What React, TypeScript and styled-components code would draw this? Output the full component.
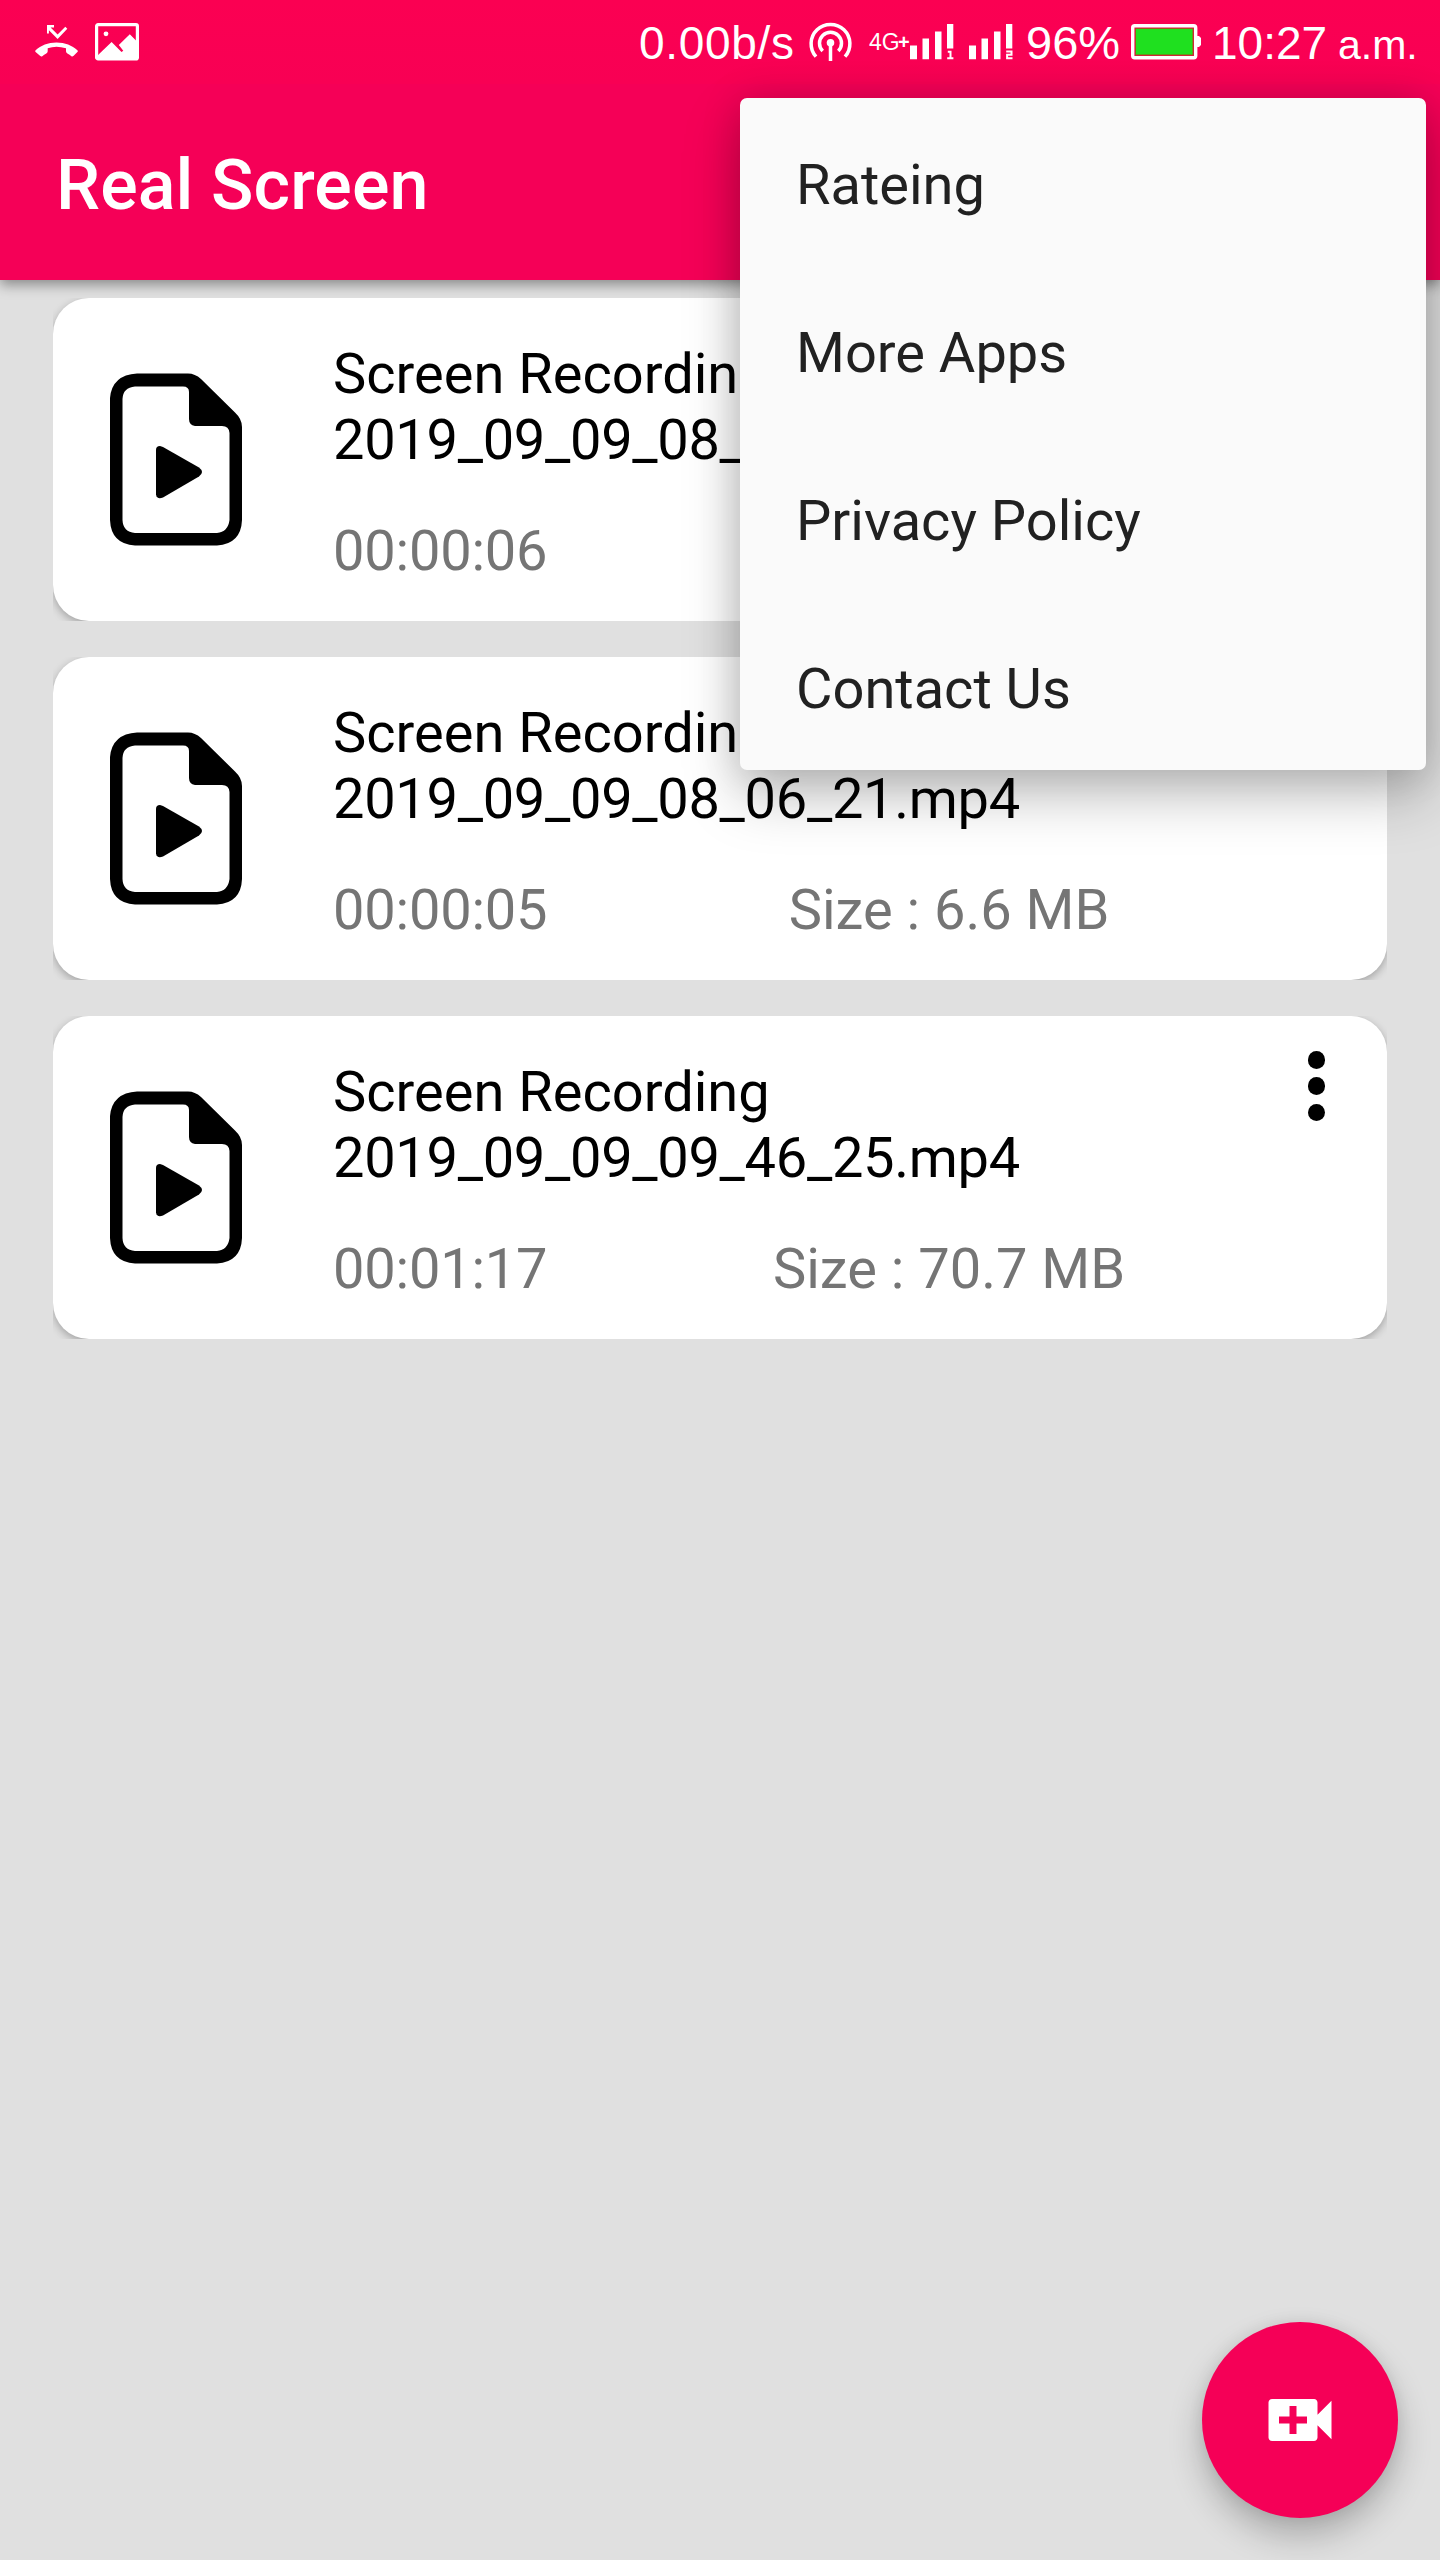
import React from 'react';
import styled, { createGlobalStyle } from 'styled-components';

const GlobalStyle = createGlobalStyle`
  * { box-sizing: border-box; }
  body { margin: 0; background: #e0e0e0; }
`;

const Screen = styled.div`
  position: relative;
  width: 1440px;
  height: 2560px;
  overflow: hidden;
  background: #e0e0e0;
  font-family: Roboto, "Liberation Sans", sans-serif;
`;

const Header = styled.header`
  position: relative;
  height: 280px;
  background: #f50057;
  color: #fff;
  box-shadow: 0 5px 12px rgba(0, 0, 0, 0.38);
`;

const StatusBar = styled.div`
  display: flex;
  align-items: center;
  height: 84px;
  padding: 0 22px 0 35px;
  background: linear-gradient(#fb0052, #f80054);
  font-family: "Liberation Sans", Arial, sans-serif;
`;

const Spacer = styled.div`
  flex: 1;
`;

const StatusText = styled.span<{
  $size: number;
  $width: number;
  $gap?: number;
  $shift?: number;
  $spacing?: number;
  $bold?: boolean;
}>`
  flex: none;
  width: ${p => p.$width}px;
  margin-left: ${p => p.$gap ?? 0}px;
  padding-top: ${p => p.$shift ?? 0}px;
  font-size: ${p => p.$size}px;
  font-weight: ${p => (p.$bold ? 700 : 400)};
  line-height: 54px;
  letter-spacing: ${p => p.$spacing ?? 0}px;
  white-space: nowrap;
`;

const StatusIcon = styled.svg<{ $gap?: number }>`
  flex: none;
  display: block;
  margin-left: ${p => p.$gap ?? 0}px;
`;

const Toolbar = styled.div`
  display: flex;
  align-items: center;
  height: 196px;
  padding: 6px 56px 0;
`;

const Title = styled.h1`
  margin: 0;
  font-size: 70px;
  font-weight: 500;
  line-height: 82px;
  letter-spacing: 0.1px;
`;

const List = styled.main`
  display: flex;
  flex-direction: column;
  gap: 36px;
  padding: 18px 53px;
`;

const CardClip = styled.div`
  height: 323px;
  overflow: hidden;
`;

const Card = styled.article`
  display: flex;
  height: 100%;
  border-radius: 36px;
  background: #fff;
  box-shadow: 0 3px 8px rgba(0, 0, 0, 0.28);
`;

const Thumb = styled.div`
  width: 280px;
  padding: 75px 0 0 57px;
`;

const Info = styled.div`
  width: 924px;
  padding-top: 43px;
  font-size: 56px;
  line-height: 66px;
`;

const Name = styled.div`
  width: 720px;
  color: #000;
`;

const Stamp = styled.span`
  letter-spacing: -0.3px;
`;

const Meta = styled.div`
  display: grid;
  grid-template-columns: 1fr 2fr;
  margin-top: 45px;
  color: #757575;
`;

const Duration = styled.span`
  letter-spacing: -0.2px;
`;

const Size = styled.span`
  text-align: center;
`;

const MoreButton = styled.button`
  display: flex;
  flex-direction: column;
  align-items: center;
  gap: 8.5px;
  width: 119px;
  padding: 35px 0 0;
  border: 0;
  background: none;
`;

const Dot = styled.i`
  width: 17.8px;
  height: 17.8px;
  border-radius: 50%;
  background: #000;
`;

const Menu = styled.nav`
  position: absolute;
  top: 98px;
  left: 740px;
  width: 686px;
  border-radius: 7px;
  background: #fafafa;
  box-shadow: 0 26px 56px rgba(0, 0, 0, 0.25), 0 0 40px rgba(0, 0, 0, 0.14);
`;

const MenuItem = styled.div`
  display: flex;
  align-items: center;
  height: 168px;
  padding: 5px 56px 0;
  color: #212121;
  font-size: 56px;
  line-height: 66px;
`;

const Fab = styled.button`
  position: absolute;
  right: 42px;
  bottom: 42px;
  display: flex;
  align-items: center;
  justify-content: center;
  width: 196px;
  height: 196px;
  padding: 0;
  border: 0;
  border-radius: 50%;
  background: #f50057;
  box-shadow: 0 18px 34px rgba(0, 0, 0, 0.24), 0 0 16px rgba(0, 0, 0, 0.07);
`;

const MissedCallIcon = () => (
  <StatusIcon width="43" height="34" viewBox="0 0 43 34" fill="#fff">
    <path d="M12 0h7v2.500h-3.400l7 7L30.300 1.800l2 2L22.600 14 13.900 5.200V8.500H12z" />
    <path d="M.6 25.200C6 20.500 13 17.600 21.500 17.600S37 20.500 42.400 25.200q.8 1 0 1.900l-4 4q-1 .8-2 .1-1.800-1.600-4-2.700-1.400-.8-1.400-2.300v-3Q26 21.700 21.500 21.700T12.700 23.200v3q0 1.500-1.400 2.300-2.200 1.100-4 2.700-1 .7-2-.1l-4.700-4q-.7-1 0-1.900z" />
  </StatusIcon>
);

const PictureIcon = () => (
  <StatusIcon $gap={16.5} width="44" height="38" viewBox="0 0 44 38">
    <rect x="1.600" y="1.600" width="40.800" height="34.300" rx="1.500" fill="none" stroke="#fff" strokeWidth="3.200" />
    <circle cx="11" cy="10.800" r="2.400" fill="#fff" />
    <path d="M2 33 16.600 19 26.500 29 28.300 27.700 23.800 22 34.800 11.300 42 18.500V36H2z" fill="#fff" />
  </StatusIcon>
);

const HotspotIcon = () => (
  <StatusIcon width="43" height="40" viewBox="0 0 43 40" fill="none" stroke="#fff" strokeWidth="3.500">
    <path d="M7 34.700A19.400 19.400 0 1 1 36 34.700" />
    <path d="M13.700 29A11 11 0 1 1 29.300 29" />
    <circle cx="21.500" cy="20.700" r="3.800" fill="#fff" stroke="none" />
    <path d="M21.500 21v18" />
  </StatusIcon>
);

const SignalIcon = ({ slot, gap }: { slot: 1 | 2; gap: number }) => (
  <StatusIcon $gap={gap} width="44" height="36" viewBox="0 0 44 36" fill="#fff">
    <path d="M0 21.500h7V35.300H0zM12.500 14.500h6.500v20.800h-6.500zM25 7.500h6.500v27.800H25zM37 0h6.300v24.500H37z" />
    <path
      d={slot === 1 ? 'M37.800 27.800H40.500V34M37.200 34.300h6.200' : 'M37.200 27.500h5.300v3.300h-4.400v3.500h5.400'}
      fill="none"
      stroke="#fff"
      strokeWidth="2"
    />
  </StatusIcon>
);

const BatteryIcon = () => (
  <StatusIcon width="70" height="36" viewBox="0 0 70 36">
    <rect x="1.700" y="1.700" width="63" height="32" rx="2" fill="none" stroke="#fff" strokeWidth="3.400" />
    <rect x="4.500" y="4.500" width="57.500" height="26.500" fill="#1fe01f" stroke="#a5501c" />
    <path d="M66 12h2l2 2v7l-2 2h-2z" fill="#fff" />
  </StatusIcon>
);

const VideoFileIcon = () => (
  <svg width="132" height="173" viewBox="0 0 132 173">
    <path
      fillRule="evenodd"
      d="M27 0.500H78Q85 0.500 91 6L125 39.500Q132 46 132 54V147Q131 171 107 172.500H25Q1 171 0 147V25Q2 2 27 0.500ZM25 13.500Q13 14.500 12.500 26V147Q13 159 25 160H107Q118 159 119.500 147V60Q119 53 112 53H85Q79 52 79 46V19Q79 13.500 73 13.500Z"
    />
    <path d="M46 77Q46 73 50 73L53 74 89 94.500Q95 99 89 103.500L53 124.500Q47 127 46 121.500Z" />
  </svg>
);

const recordings = [
  { stamp: '2019_09_09_08_', duration: '00:00:06', size: '' },
  { stamp: '2019_09_09_08_06_21.mp4', duration: '00:00:05', size: '6.6 MB' },
  { stamp: '2019_09_09_09_46_25.mp4', duration: '00:01:17', size: '70.7 MB' },
];

const menuItems = ['Rateing', 'More Apps', 'Privacy Policy', 'Contact Us'];

export default function App() {
  return (
    <Screen>
      <GlobalStyle />
      <Header>
        <StatusBar>
          <MissedCallIcon />
          <PictureIcon />
          <Spacer />
          <StatusText $size={46} $width={170} $shift={2} $spacing={0.7}>0.00b/s</StatusText>
          <HotspotIcon />
          <StatusText $size={23} $width={29} $gap={17}>4G</StatusText>
          <StatusText $size={20} $width={12} $bold>+</StatusText>
          <SignalIcon slot={1} gap={0} />
          <SignalIcon slot={2} gap={15} />
          <StatusText $size={47} $width={105} $gap={13} $shift={2}>96%</StatusText>
          <BatteryIcon />
          <StatusText $size={46} $width={126} $gap={11} $shift={2}>10:27</StatusText>
          <StatusText $size={41} $width={80} $shift={5}>a.m.</StatusText>
        </StatusBar>
        <Toolbar>
          <Title>Real Screen</Title>
        </Toolbar>
      </Header>
      <List>
        {recordings.map(r => (
          <CardClip key={r.duration}>
            <Card>
              <Thumb>
                <VideoFileIcon />
              </Thumb>
              <Info>
                <Name>
                  Screen {r.size ? 'Recording' : 'Recordin'}
                  <br />
                  <Stamp>{r.stamp}</Stamp>
                </Name>
                <Meta>
                  <Duration>{r.duration}</Duration>
                  {r.size && <Size>Size : {r.size}</Size>}
                </Meta>
              </Info>
              <MoreButton>
                <Dot />
                <Dot />
                <Dot />
              </MoreButton>
            </Card>
          </CardClip>
        ))}
      </List>
      <Menu>
        {menuItems.map(label => (
          <MenuItem key={label}>{label}</MenuItem>
        ))}
      </Menu>
      <Fab>
        <svg width="84" height="84" viewBox="0 0 24 24" fill="#fff">
          <path d="M17 10.500V7c0-.55-.45-1-1-1H4c-.55 0-1 .45-1 1v10c0 .55.45 1 1 1h12c.55 0 1-.45 1-1v-3.500l4 4v-11l-4 4zM14 13h-3v3H9v-3H6v-2h3V8h2v3h3v2z" />
        </svg>
      </Fab>
    </Screen>
  );
}
